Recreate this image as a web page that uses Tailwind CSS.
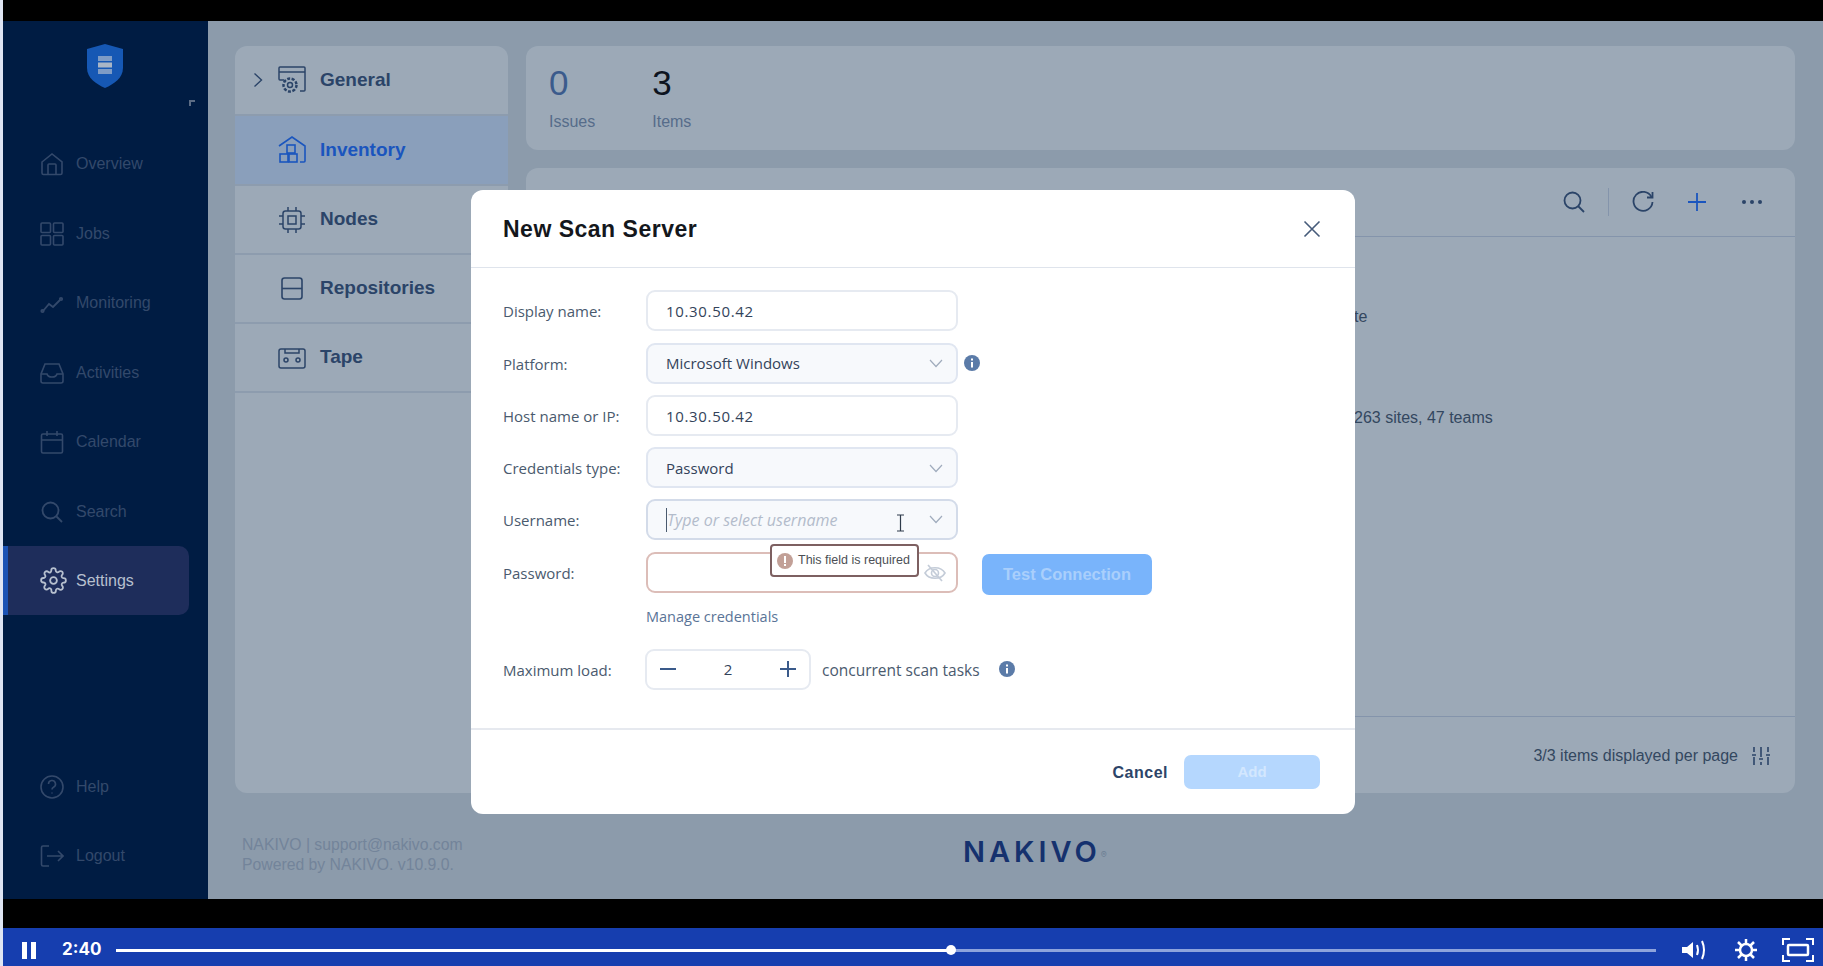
<!DOCTYPE html>
<html lang="en">
<head>
    <meta charset="UTF-8">
    <title>New Scan Server | NAKIVO</title>
    <script src="https://cdn.jsdelivr.net/npm/@tailwindcss/browser@4"></script>
</head>
<body class="relative w-[1823px] h-[966px] overflow-hidden bg-black font-['Liberation_Sans',sans-serif]">
    <div class="flex h-full">
        <!-- light strip at the left edge of the capture -->
        <div class="w-[3px] bg-[#dfe5f3]"></div>

        <div class="flex-1 flex flex-col">
            <div class="h-[21px] bg-black"></div>

            <!-- dimmed app -->
            <div class="h-[878px] flex bg-[#8c9bab]">
                <!-- sidebar -->
                <aside class="w-[205px] bg-[#001c43] flex flex-col text-[16px] text-[#33496b]">
                    <div class="relative h-[108px]">
                        <svg class="absolute left-[83px] top-[22px]" width="38" height="46" viewBox="0 0 38 46">
                            <path d="M19 1 L37 6 V25 C37 35 28 41 19 45 C10 41 1 35 1 25 V6 Z" fill="#1658b4"/>
                            <rect x="12" y="13" width="14" height="5" fill="#7e9cc6"/>
                            <rect x="12" y="19.5" width="14" height="5" fill="#a9b6c6"/>
                            <rect x="12" y="26" width="14" height="5" fill="#7e9cc6"/>
                        </svg>
                        <div class="absolute left-[186px] top-[79px] w-[6px] h-[6px] border-l-2 border-t-2 border-[#5c6c84]"></div>
                    </div>
                    <nav class="flex flex-col">
                        <a class="h-[69.5px] flex items-center pl-[37px] gap-[12px] pt-[1px]">
                            <svg class="w-6 h-6" viewBox="0 0 24 24" fill="none" stroke="#33496b" stroke-width="1.6"><path d="M2 10 L12 2 L22 10 V21 a1.5 1.5 0 0 1 -1.5 1.5 H3.500 A1.500 1.500 0 0 1 2 21 Z"/><path d="M8 22 V13 a1 1 0 0 1 1-1 h6 a1 1 0 0 1 1 1 V22"/></svg>
                            <span>Overview</span>
                        </a>
                        <a class="h-[69.5px] flex items-center pl-[37px] gap-[12px] pt-[1px]">
                            <svg class="w-6 h-6" viewBox="0 0 24 24" fill="none" stroke="#33496b" stroke-width="1.6"><rect x="1" y="1" width="9.500" height="9.500" rx="1"/><rect x="13.500" y="1" width="9.500" height="9.500" rx="1"/><rect x="1" y="13.500" width="9.500" height="9.500" rx="1"/><rect x="13.500" y="13.500" width="9.500" height="9.500" rx="1"/></svg>
                            <span>Jobs</span>
                        </a>
                        <a class="h-[69.500px] flex items-center pl-[37px] gap-[12px] pt-[1px]">
                            <svg class="w-6 h-6" viewBox="0 0 24 24" fill="none" stroke="#33496b" stroke-width="1.800"><path d="M3 20 L9 13 L13 16 L20 9"/><circle cx="2.500" cy="20" r="1.200"/><circle cx="21" cy="8" r="1.200"/></svg>
                            <span>Monitoring</span>
                        </a>
                        <a class="h-[69.500px] flex items-center pl-[37px] gap-[12px] pt-[1px]">
                            <svg class="w-6 h-6" viewBox="0 0 24 24" fill="none" stroke="#33496b" stroke-width="1.600"><path d="M5 3 H19 L23 13 V20 a2 2 0 0 1 -2 2 H3 a2 2 0 0 1 -2-2 V13 Z"/><path d="M1 13 H7 C8 17 16 17 17 13 H23"/></svg>
                            <span>Activities</span>
                        </a>
                        <a class="h-[69.500px] flex items-center pl-[37px] gap-[12px]">
                            <svg class="w-6 h-6" viewBox="0 0 24 24" fill="none" stroke="#33496b" stroke-width="1.600"><rect x="1.500" y="4" width="21" height="19" rx="1.500"/><path d="M1.500 10 H22.500 M7 1 V6 M17 1 V6"/></svg>
                            <span>Calendar</span>
                        </a>
                        <a class="h-[69.500px] flex items-center pl-[37px] gap-[12px] pt-[1px]">
                            <svg class="w-6 h-6" viewBox="0 0 24 24" fill="none" stroke="#33496b" stroke-width="1.800"><circle cx="10.500" cy="10.500" r="8"/><path d="M16.500 16.500 L22 22"/></svg>
                            <span>Search</span>
                        </a>
                        <a class="h-[69px] w-[186px] flex items-center pl-[32px] gap-[12px] rounded-r-[10px] bg-[#1e2d5b] text-[#b7c0cf] border-l-[5px] border-[#1a52b4]">
                            <svg class="w-[27px] h-[27px]" viewBox="0 0 24 24" fill="none" stroke="#b7c0cf" stroke-width="1.600" stroke-linejoin="round"><circle cx="12" cy="12" r="3"/><path d="M19.400 15a1.650 1.650 0 0 0 .33 1.820l.06.06a2 2 0 1 1-2.830 2.830l-.06-.06a1.650 1.650 0 0 0-2.800 1.170V21a2 2 0 0 1-4 0v-.09A1.650 1.650 0 0 0 7.270 19.400l-.06.06a2 2 0 1 1-2.830-2.830l.06-.06a1.650 1.650 0 0 0-1.170-2.800H3a2 2 0 0 1 0-4h.09A1.650 1.650 0 0 0 4.600 7.270l-.06-.06a2 2 0 1 1 2.830-2.830l.06.06a1.650 1.650 0 0 0 1.820.33H9a1.650 1.650 0 0 0 1-1.510V3a2 2 0 0 1 4 0v.09a1.650 1.650 0 0 0 2.800 1.170l.06-.06a2 2 0 1 1 2.830 2.830l-.06.06a1.650 1.650 0 0 0 1.170 2.800H21a2 2 0 0 1 0 4h-.09a1.650 1.650 0 0 0-1.510 1z"/></svg>
                            <span class="-ml-[3px]">Settings</span>
                        </a>
                    </nav>
                    <div class="mt-auto mb-[8px] flex flex-col">
                        <a class="h-[69.500px] flex items-center pl-[37px] gap-[12px]">
                            <svg class="w-6 h-6" viewBox="0 0 24 24" fill="none" stroke="#33496b" stroke-width="1.600"><circle cx="12" cy="12" r="11"/><path d="M8.500 9 a3.500 3.500 0 1 1 5 3.200 c-1 .5 -1.500 1.200 -1.500 2.300"/><path d="M12 17.500 v1"/></svg>
                            <span>Help</span>
                        </a>
                        <a class="h-[69.500px] flex items-center pl-[37px] gap-[12px]">
                            <svg class="w-6 h-6" viewBox="0 0 24 24" fill="none" stroke="#33496b" stroke-width="1.600"><path d="M9 2 H3 a1.500 1.500 0 0 0 -1.500 1.500 V20.500 A1.500 1.500 0 0 0 3 22 H9"/><path d="M7 12 H23 M18 7 L23 12 L18 17"/></svg>
                            <span>Logout</span>
                        </a>
                    </div>
                </aside>

                <!-- content -->
                <main class="flex-1 relative pt-[25px] pl-[27px] pr-[28px]">
                    <div class="flex gap-[18px]">
                        <!-- settings tree -->
                        <div class="w-[273px] h-[747px] rounded-[12px] bg-[#9ca9b7] overflow-hidden text-[19px] font-bold text-[#2b4468]">
                            <div class="h-[70px] flex items-center border-b-2 border-[#8d9cae] pl-[18px]">
                                <svg class="w-[10px] h-[16px] mr-[15px]" viewBox="0 0 10 16" fill="none" stroke="#2b4468" stroke-width="1.400"><path d="M1.500 1.500 L8.500 8 L1.500 14.500"/></svg>
                                <svg class="w-[28px] h-[28px] mr-[14px]" viewBox="0 0 28 28" fill="none" stroke="#2b4468" stroke-width="1.500"><path d="M6 14 H2 a1 1 0 0 1 -1 -1 V2 a1 1 0 0 1 1 -1 H26 a1 1 0 0 1 1 1 V24 a1 1 0 0 1 -1 1 H22 M1 6 H27"/><circle cx="12" cy="19" r="2.500"/><circle cx="12" cy="19" r="6.500" stroke-dasharray="3 1.500" stroke-width="2.500"/></svg>
                                <span>General</span>
                            </div>
                            <div class="h-[70px] flex items-center border-b-2 border-[#8d9cae] pl-[43px] bg-[#8a9fbb] text-[#1a55be]">
                                <svg class="w-[28px] h-[28px] mr-[14px]" viewBox="0 0 28 28" fill="none" stroke="#1a55be" stroke-width="1.600"><path d="M1 10 L14 1 L27 10 V25 a1 1 0 0 1 -1 1 H22"/><rect x="9" y="9" width="8" height="8"/><rect x="2" y="18" width="8" height="8"/><rect x="11" y="18" width="8" height="8"/></svg>
                                <span>Inventory</span>
                            </div>
                            <div class="h-[69px] flex items-center border-b-2 border-[#8d9cae] pl-[43px]">
                                <svg class="w-[28px] h-[28px] mr-[14px]" viewBox="0 0 28 28" fill="none" stroke="#2b4468" stroke-width="1.500"><rect x="5" y="5" width="18" height="18" rx="2.500"/><rect x="10" y="10" width="8" height="8"/><path d="M10 1 V5 M18 1 V5 M10 23 V27 M18 23 V27 M1 10 H5 M1 18 H5 M23 10 H27 M23 18 H27"/></svg>
                                <span>Nodes</span>
                            </div>
                            <div class="h-[69px] flex items-center border-b-2 border-[#8d9cae] pl-[43px]">
                                <svg class="w-[28px] h-[28px] mr-[14px]" viewBox="0 0 28 28" fill="none" stroke="#2b4468" stroke-width="1.600"><rect x="4" y="3" width="20" height="21" rx="2.500"/><path d="M4 13.500 H24"/></svg>
                                <span>Repositories</span>
                            </div>
                            <div class="h-[69px] flex items-center border-b-2 border-[#8d9cae] pl-[43px]">
                                <svg class="w-[28px] h-[28px] mr-[14px]" viewBox="0 0 28 28" fill="none" stroke="#2b4468" stroke-width="1.500"><rect x="1" y="5" width="26" height="19" rx="2"/><path d="M7 5 V9 H21 V5"/><circle cx="8" cy="16" r="2"/><circle cx="20" cy="16" r="2"/></svg>
                                <span>Tape</span>
                            </div>
                        </div>

                        <div class="flex-1 flex flex-col gap-[18px]">
                            <!-- stats -->
                            <div class="h-[104px] rounded-[12px] bg-[#9ca9b7] flex pl-[23px] pt-[17px] gap-[57px]">
                                <div>
                                    <div class="text-[35px] leading-[40px] text-[#3b5b8c]">0</div>
                                    <div class="text-[16px] mt-[7px] text-[#566c8a]">Issues</div>
                                </div>
                                <div>
                                    <div class="text-[35px] leading-[40px] text-[#0d1420]">3</div>
                                    <div class="text-[16px] mt-[7px] text-[#566c8a]">Items</div>
                                </div>
                            </div>

                            <!-- list card -->
                            <div class="h-[625px] rounded-[12px] bg-[#9ca9b7] flex flex-col">
                                <div class="h-[69px] flex items-center justify-end pr-[33px] border-b border-[#8494ab] text-[#2b4468]">
                                    <svg class="w-[22px] h-[22px]" viewBox="0 0 22 22" fill="none" stroke="#2b4468" stroke-width="1.800"><circle cx="9.500" cy="9.500" r="8"/><path d="M15 15 L21 21"/></svg>
                                    <div class="w-px h-[28px] bg-[#8494ab] ml-[23px] mr-[23px]"></div>
                                    <svg class="w-[22px] h-[22px] mr-[33px]" viewBox="0 0 22 22" fill="none" stroke="#2b4468" stroke-width="1.800"><path d="M19.500 6 A9.500 9.500 0 1 0 20.500 11"/><path d="M20.500 1 V6.500 H15"/></svg>
                                    <svg class="w-[20px] h-[20px] mr-[35px]" viewBox="0 0 20 20" fill="none" stroke="#1a55be" stroke-width="1.800"><path d="M10 1 V19 M1 10 H19"/></svg>
                                    <div class="flex gap-[4px]">
                                        <span class="w-[4px] h-[4px] rounded-full bg-[#2b4468]"></span>
                                        <span class="w-[4px] h-[4px] rounded-full bg-[#2b4468]"></span>
                                        <span class="w-[4px] h-[4px] rounded-full bg-[#2b4468]"></span>
                                    </div>
                                </div>
                                <div class="flex-1 relative text-[16px] text-[#33475f]">
                                    <span class="absolute left-[828px] top-[68px]">te</span>
                                    <span class="absolute left-[828px] top-[169px]">263 sites, 47 teams</span>
                                </div>
                                <div class="h-[77px] border-t border-[#8494ab] flex items-center justify-end pr-[24px] pt-[1px] text-[16px] text-[#33475f]">
                                    <span class="mr-[13px]">3/3 items displayed per page</span>
                                    <svg class="w-[20px] h-[20px]" viewBox="0 0 20 20" fill="none" stroke="#2b4468" stroke-width="1.600"><path d="M3 1 V6 M3 11 V19 M10 1 V11 M10 16 V19 M17 1 V6 M17 11 V19 M1 9 H5 M8 13 H12 M15 9 H19"/></svg>
                                </div>
                            </div>
                        </div>
                    </div>

                    <!-- footer -->
                    <div class="flex mt-[42px] text-[15.75px] leading-[20px] text-[#73849a]">
                        <div class="ml-[7px] w-[300px]">
                            <div>NAKIVO | support@nakivo.com</div>
                            <div>Powered by NAKIVO. v10.9.0.</div>
                        </div>
                        <div class="ml-[421px] -mt-[1px] text-[29px] leading-[36px] font-semibold tracking-[4px] text-[#15316e] font-['Inter',sans-serif]">NAKIVO<sup class="text-[9px] font-normal tracking-normal text-[#6d7f94]">®</sup></div>
                    </div>
                </main>
            </div>

            <div class="flex-1 bg-black"></div>

            <!-- player bar -->
            <div class="h-[38px] bg-[#163eaf] flex items-center text-white pt-[6px]">
                <div class="flex gap-[4px] ml-[19px]">
                    <span class="w-[5px] h-[17px] bg-white"></span>
                    <span class="w-[5px] h-[17px] bg-white"></span>
                </div>
                <span class="ml-[26px] text-[17px] font-bold font-['Inter',sans-serif]">2:40</span>
                <div class="relative ml-[15px] w-[1540px] h-[3px] bg-[#8ea3dc]">
                    <div class="h-full w-[835px] bg-white"></div>
                    <div class="absolute left-[830px] -top-[3.500px] w-[10px] h-[10px] rounded-full bg-white"></div>
                </div>
                <svg class="ml-[25px] w-[27px] h-[22px]" viewBox="0 0 27 22" fill="white"><path d="M1 8 H6 L12 3 V19 L6 14 H1 Z"/><path d="M16 6 Q18 11 16 16" fill="none" stroke="white" stroke-width="2"/><path d="M21 2 Q25 11 21 20" fill="none" stroke="white" stroke-width="2"/></svg>
                <svg class="ml-[26px] w-[24px] h-[24px]" viewBox="0 0 24 24" fill="none" stroke="white"><circle cx="12" cy="12" r="6" stroke-width="2.500"/><path d="M12 1 V6 M12 18 V23 M1 12 H6 M18 12 H23 M4 4 L8 8 M16 16 L20 20 M20 4 L16 8 M8 16 L4 20" stroke-width="2.500"/></svg>
                <svg class="ml-[24px] w-[32px] h-[24px]" viewBox="0 0 32 24" fill="none" stroke="white" stroke-width="2"><path d="M1 7 V1 H8 M24 1 H31 V7 M31 17 V23 H24 M8 23 H1 V17"/><rect x="6" y="7" width="20" height="10" rx="1" stroke-width="2.500"/></svg>
            </div>
        </div>
    </div>

    <!-- modal -->
    <div class="absolute left-[471px] top-[190px] w-[884px] h-[624px] rounded-[12px] bg-white flex flex-col font-['Open_Sans',sans-serif] text-[15px] text-[#4a5a6e]">
        <div class="h-[78px] flex items-center justify-between pl-[32px] pr-[34px] border-b border-[#dfe4ec]">
            <h2 class="pt-[2px] text-[23px] font-bold text-[#14171c] font-['Liberation_Sans',sans-serif] tracking-[.5px]">New Scan Server</h2>
            <svg class="w-[18px] h-[18px]" viewBox="0 0 18 18" fill="none" stroke="#465b7a" stroke-width="1.600"><path d="M1.500 1.500 L16.500 16.500 M16.500 1.500 L1.500 16.500"/></svg>
        </div>

        <div class="flex-1 pl-[32px] pt-[22px] flex flex-col">
            <div class="flex items-center h-[41px]">
                <label class="w-[143px] pt-[2px]">Display name:</label>
                <div class="w-[312px] h-full rounded-[9px] border-2 border-[#e6eaf1] flex items-center pl-[18px] pt-[2px] text-[#33435a] tracking-[.67px]">10.30.50.42</div>
            </div>
            <div class="flex items-center h-[41px] mt-[11.500px]">
                <label class="w-[143px] pt-[2px]">Platform:</label>
                <div class="w-[312px] h-full rounded-[9px] border-2 border-[#e0e6f1] bg-[#f7f9fc] flex items-center pl-[18px] pr-[13px] justify-between text-[#33435a]">
                    <span>Microsoft Windows</span>
                    <svg class="w-[14px] h-[9px]" viewBox="0 0 14 9" fill="none" stroke="#a0acbd" stroke-width="1.200"><path d="M1 1 L7 7.500 L13 1"/></svg>
                </div>
                <svg class="w-[16px] h-[16px] ml-[6px]" viewBox="0 0 16 16"><circle cx="8" cy="8" r="8" fill="#5b7ba8"/><rect x="7" y="7" width="2" height="5.500" fill="white"/><rect x="7" y="3.500" width="2" height="2" fill="white"/></svg>
            </div>
            <div class="flex items-center h-[41px] mt-[11px]">
                <label class="w-[143px] pt-[2px]">Host name or IP:</label>
                <div class="w-[312px] h-full rounded-[9px] border-2 border-[#e6eaf1] flex items-center pl-[18px] pt-[2px] text-[#33435a] tracking-[.67px]">10.30.50.42</div>
            </div>
            <div class="flex items-center h-[41px] mt-[11.500px]">
                <label class="w-[143px] pt-[2px]">Credentials type:</label>
                <div class="w-[312px] h-full rounded-[9px] border-2 border-[#e0e6f1] bg-[#f7f9fc] flex items-center pl-[18px] pr-[13px] pt-[1px] justify-between text-[#33435a]">
                    <span>Password</span>
                    <svg class="w-[14px] h-[9px]" viewBox="0 0 14 9" fill="none" stroke="#a0acbd" stroke-width="1.200"><path d="M1 1 L7 7.500 L13 1"/></svg>
                </div>
            </div>
            <div class="flex items-center h-[41px] mt-[11px]">
                <label class="w-[143px] pt-[2px]">Username:</label>
                <div class="relative w-[312px] h-full rounded-[9px] border-2 border-[#d3dbe9] bg-[#f7f9fc] flex items-center pl-[18px] pr-[13px] justify-between text-[16px] text-[#b3bccb] italic">
                    <span class="border-l border-[#4a5a6e]">Type or select username</span>
                    <svg class="w-[14px] h-[9px]" viewBox="0 0 14 9" fill="none" stroke="#a0acbd" stroke-width="1.200"><path d="M1 1 L7 7.500 L13 1"/></svg>
                    <!-- text cursor -->
                    <svg class="absolute left-[248px] top-[13px] w-[9px] h-[18px]" viewBox="0 0 9 18" fill="none" stroke="#2f3b4b" stroke-width="1.200"><path d="M1 1 H8 M4.500 1 V17 M1 17 H8"/></svg>
                </div>
            </div>
            <div class="flex items-center h-[41px] mt-[12px]">
                <label class="w-[143px] pt-[1px]">Password:</label>
                <div class="relative w-[312px] h-full rounded-[9px] border-2 border-[#dcbdb8] flex items-center justify-end pr-[10px]">
                    <svg class="w-[22px] h-[18px]" viewBox="0 0 22 18" fill="none" stroke="#c4ccd8" stroke-width="1.600"><path d="M1 9 C5 2 17 2 21 9 C17 16 5 16 1 9 Z"/><circle cx="11" cy="9" r="3.500"/><path d="M4 1 L18 17"/></svg>
                    <!-- validation tooltip -->
                    <div class="absolute left-[122px] -top-[10px] w-[149px] h-[33px] rounded-[4px] border-2 border-[#7d6061] bg-white flex items-center pl-[5px] gap-[5px] text-[12.500px] text-[#4c4f55] font-['Liberation_Sans',sans-serif] whitespace-nowrap">
                        <svg class="w-[16px] h-[16px] shrink-0" viewBox="0 0 16 16"><circle cx="8" cy="8" r="8" fill="#c2a097"/><rect x="7" y="3" width="2" height="7" fill="#fff"/><rect x="7" y="11" width="2" height="2" fill="#fff"/></svg>
                        <span>This field is required</span>
                    </div>
                </div>
                <button class="ml-[24px] mt-[3px] w-[170px] h-[41px] rounded-[7px] bg-[#79b4fb] text-[16.500px] text-[#a9cffc] font-bold font-['Liberation_Sans',sans-serif]">Test Connection</button>
            </div>
            <a class="ml-[143px] mt-[13px] text-[14.500px] text-[#5a7497]">Manage credentials</a>
            <div class="flex items-center h-[41px] mt-[21px]">
                <label class="w-[142px] pt-[2px]">Maximum load:</label>
                <div class="w-[166px] h-full rounded-[9px] border-2 border-[#e6eaf1] flex items-center justify-between px-[13px] text-[#33435a]">
                    <svg class="w-[16px] h-[16px]" viewBox="0 0 16 16" stroke="#3a5a8a" stroke-width="2"><path d="M0 8 H16"/></svg>
                    <span>2</span>
                    <svg class="w-[16px] h-[16px]" viewBox="0 0 16 16" stroke="#3a5a8a" stroke-width="2"><path d="M0 8 H16 M8 0 V16"/></svg>
                </div>
                <span class="ml-[11px] pt-[3px] text-[15.500px]">concurrent scan tasks</span>
                <svg class="w-[16px] h-[16px] ml-[19px]" viewBox="0 0 16 16"><circle cx="8" cy="8" r="8" fill="#5b7ba8"/><rect x="7" y="7" width="2" height="5.500" fill="white"/><rect x="7" y="3.500" width="2" height="2" fill="white"/></svg>
            </div>
        </div>

        <div class="h-[86px] border-t-2 border-[#e6e9ef] flex items-center justify-end pr-[35px] font-['Liberation_Sans',sans-serif]">
            <button class="pt-[2px] font-bold text-[16px] text-[#2c4468] mr-[16px] tracking-[.5px]">Cancel</button>
            <button class="w-[136px] h-[34px] rounded-[7px] bg-[#b5d7fe] text-[#d3e7fe] font-bold">Add</button>
        </div>
    </div>
</body>
</html>
